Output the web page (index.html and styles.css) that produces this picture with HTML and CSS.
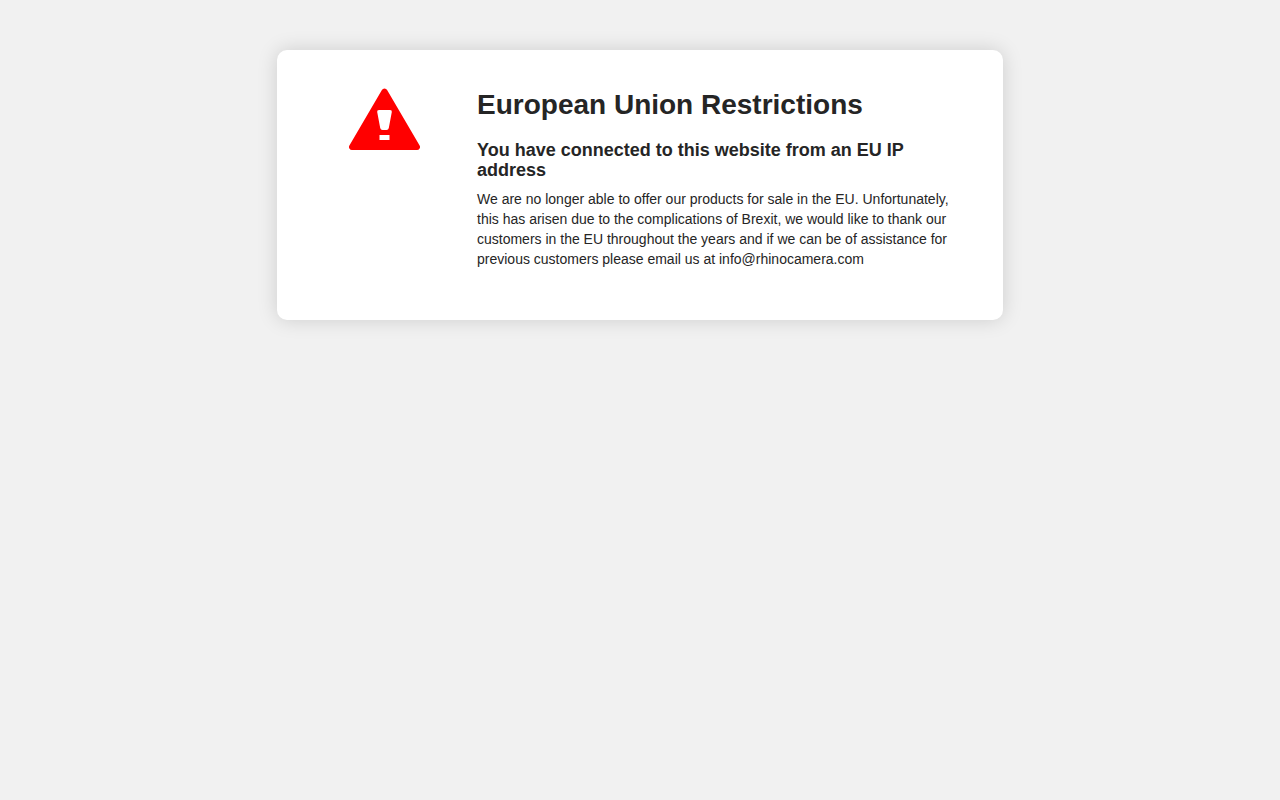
FILE: index.html
```html
<!DOCTYPE html>
<html lang="en">
<head>
<meta charset="utf-8">
<meta name="viewport" content="width=device-width, initial-scale=1">
<title>European Union Restrictions</title>
<link rel="stylesheet" href="styles.css">
</head>
<body>
<main class="notice">
  <div class="notice-icon">
    <svg class="warning" viewBox="0 0 71 62" aria-hidden="true">
      <path fill="#f00" d="M32.900 2a3 3 0 0 1 5.200 0L70.600 57.500a3 3 0 0 1-2.600 4.500H3A3 3 0 0 1 .4 57.500z"/>
      <path fill="#fff" d="M30 22h11q2.200 0 1.800 2L39.800 40q-.4 2-2.300 2h-4q-1.900 0-2.300-2L28.200 24q-.4-2 1.800-2zM30.500 47h10v5h-10z"/>
    </svg>
  </div>
  <div class="notice-text">
    <h1 class="title">European Union Restrictions</h1>
    <h2 class="subtitle">You have connected to this website from an EU IP address</h2>
    <p class="message">We are no longer able to offer our products for sale in the EU. Unfortunately, this has arisen due to the complications of Brexit, we would like to thank our customers in the EU throughout the years and if we can be of assistance for previous customers please email us at info@rhinocamera.com</p>
  </div>
</main>
</body>
</html>
```
FILE: styles.css
```css
* {
  box-sizing: border-box;
}

body {
  margin: 0;
  padding: 50px 20px;
  background: #f1f1f1;
  color: #252525;
  font-family: "Liberation Sans", Arial, sans-serif;
  font-size: 14px;
  line-height: 20px;
}

.notice {
  display: flex;
  max-width: 726px;
  margin: 0 auto;
  padding: 38px 50px 51px 15px;
  border-radius: 10px;
  background: #fff;
  box-shadow: 0 0 20px rgba(0, 0, 0, 0.15);
}

.notice-icon {
  flex: 0 0 185px;
  text-align: center;
}

.warning {
  display: block;
  width: 71px;
  margin: 0 auto;
}

.notice-text {
  flex: 1;
}

.title {
  margin: 0 0 19px;
  font-size: 28px;
  line-height: 33px;
}

.subtitle {
  margin: 0 0 9px;
  font-size: 18px;
  line-height: 20px;
}

.message {
  margin: 0;
}
```
